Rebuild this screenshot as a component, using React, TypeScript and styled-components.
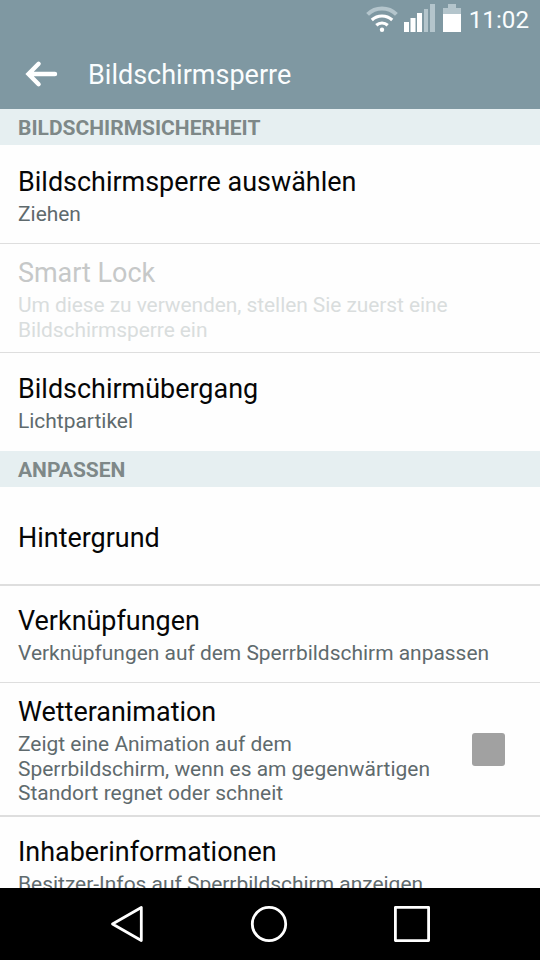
import React from "react";
import styled, { createGlobalStyle } from "styled-components";

const GlobalStyle = createGlobalStyle`
  * { box-sizing: border-box; }
  body { margin: 0; background: #000; font-family: Roboto, sans-serif; }
`;

const Screen = styled.div`
  display: flex;
  flex-direction: column;
  width: 540px;
  height: 960px;
  overflow: hidden;
  background: #fefefe;
`;

const StatusBar = styled.div`
  flex: none;
  display: flex;
  justify-content: flex-end;
  height: 40px;
  padding-right: 11px;
  background: #7f98a2;
`;

const Clock = styled.time`
  margin-left: 7px;
  font-size: 24.2px;
  line-height: 40px;
  color: #fafdfe;
  white-space: nowrap;
`;

const Header = styled.header`
  flex: none;
  display: flex;
  align-items: center;
  height: 69px;
  padding-left: 24px;
  gap: 28px;
  background: #7f98a2;
`;

const Heading = styled.h1`
  margin: 0;
  padding-top: 2px;
  font-size: 27px;
  font-weight: 400;
  line-height: 67px;
  color: #fafdfe;
`;

const Content = styled.main`
  flex: 1;
  min-height: 0;
  overflow: hidden;
`;

const SectionTitle = styled.h2`
  margin: 0;
  height: 36px;
  padding-left: 18px;
  font-size: 21px;
  font-weight: 700;
  line-height: 38px;
  color: #7e8888;
  background: #e6eff1;
`;

const Row = styled.div<{ $height: number; $top: number; $line?: number }>`
  display: flex;
  justify-content: space-between;
  height: ${(p) => p.$height}px;
  padding: ${(p) => p.$top}px 35px 0 18px;
  border-bottom: ${(p) => p.$line ?? 0}px solid #dedede;
`;

const RowText = styled.div`
  white-space: pre;
`;

const Title = styled.div<{ $disabled?: boolean }>`
  font-size: 26.95px;
  line-height: 32px;
  color: ${(p) => (p.$disabled ? "#c6c8c8" : "#060606")};
`;

const Summary = styled.div<{ $disabled?: boolean }>`
  margin-top: 4px;
  font-size: 20.95px;
  line-height: 24.5px;
  letter-spacing: ${(p) => (p.$disabled ? "-0.06px" : "0")};
  color: ${(p) => (p.$disabled ? "#d9dddd" : "#5f6a6d")};
`;

const Checkbox = styled.div`
  flex: none;
  width: 33px;
  height: 33px;
  margin-top: 37px;
  border-radius: 3px;
  background: #a1a1a1;
`;

const NavBar = styled.nav`
  flex: none;
  display: flex;
  justify-content: center;
  height: 72px;
  background: #000;
`;

type Item = {
  title: string;
  summary?: string;
  height: number;
  top: number;
  line?: number;
  disabled?: boolean;
  checkbox?: boolean;
};

const security: Item[] = [
  { title: "Bildschirmsperre auswählen", summary: "Ziehen", height: 99, top: 21, line: 1 },
  {
    title: "Smart Lock",
    summary: "Um diese zu verwenden, stellen Sie zuerst eine\nBildschirmsperre ein",
    height: 109,
    top: 13,
    line: 1,
    disabled: true,
  },
  { title: "Bildschirmübergang", summary: "Lichtpartikel", height: 98, top: 20 },
];

const customize: Item[] = [
  { title: "Hintergrund", height: 99, top: 35, line: 2 },
  { title: "Verknüpfungen", summary: "Verknüpfungen auf dem Sperrbildschirm anpassen", height: 97, top: 19, line: 1 },
  {
    title: "Wetteranimation",
    summary: "Zeigt eine Animation auf dem\nSperrbildschirm, wenn es am gegenwärtigen\nStandort regnet oder schneit",
    height: 134,
    top: 13,
    line: 2,
    checkbox: true,
  },
  { title: "Inhaberinformationen", summary: "Besitzer-Infos auf Sperrbildschirm anzeigen", height: 98, top: 19 },
];

function SettingRow({ item }: { item: Item }) {
  return (
    <Row $height={item.height} $top={item.top} $line={item.line}>
      <RowText>
        <Title $disabled={item.disabled}>{item.title}</Title>
        {item.summary && <Summary $disabled={item.disabled}>{item.summary}</Summary>}
      </RowText>
      {item.checkbox && <Checkbox role="checkbox" aria-checked={false} />}
    </Row>
  );
}

function StatusIcons() {
  return (
    <svg width="98" height="40" viewBox="365 0 98 40">
      <g fill="none" strokeWidth="3.2">
        <path d="M368.600 15.200a20.500 20.500 0 0 1 28.800 0" stroke="#b4c5cc" strokeWidth="4" transform="translate(0 -.8)" />
        <path d="M372.800 20a15 15 0 0 1 20.400 0M377.300 25.200a8.500 8.500 0 0 1 11.400 0" stroke="#fff" />
      </g>
      <circle cx="383" cy="29.700" r="2.200" fill="#fff" />
      <path d="M405 22h5v10h-5zM411.500 18h5v14h-5zM418 13h5v19h-5z" fill="#fff" />
      <path d="M425 9h4v23h-4zM431 4h5v28h-5z" fill="#b4c5cc" />
      <path d="M444 14V8h5V4h8v4h5v6z" fill="#b4c5cc" />
      <path d="M444 14h18v18h-18z" fill="#fff" />
    </svg>
  );
}

export default function App() {
  return (
    <>
      <GlobalStyle />
      <Screen>
        <StatusBar>
          <StatusIcons />
          <Clock>11:02</Clock>
        </StatusBar>
        <Header>
          <svg width="36" height="30" viewBox="24 59.500 36 30">
            <path
              d="M55 73.500H29M38.600 63.300L28.500 73.500L38.600 83.700"
              fill="none"
              stroke="#fff"
              strokeWidth="4.400"
              strokeLinecap="round"
              strokeLinejoin="miter"
            />
          </svg>
          <Heading>Bildschirmsperre</Heading>
        </Header>
        <Content>
          <SectionTitle>BILDSCHIRMSICHERHEIT</SectionTitle>
          {security.map((item) => (
            <SettingRow key={item.title} item={item} />
          ))}
          <SectionTitle>ANPASSEN</SectionTitle>
          {customize.map((item) => (
            <SettingRow key={item.title} item={item} />
          ))}
        </Content>
        <NavBar>
          <svg width="540" height="72" viewBox="0 888 540 72" fill="none" stroke="#fff" strokeWidth="2.800">
            <path d="M141.300 907.500v33L112.500 924z" strokeLinejoin="round" />
            <circle cx="269" cy="924" r="16.700" />
            <rect x="395.400" y="907.400" width="33.200" height="33.200" strokeLinejoin="round" />
          </svg>
        </NavBar>
      </Screen>
    </>
  );
}
